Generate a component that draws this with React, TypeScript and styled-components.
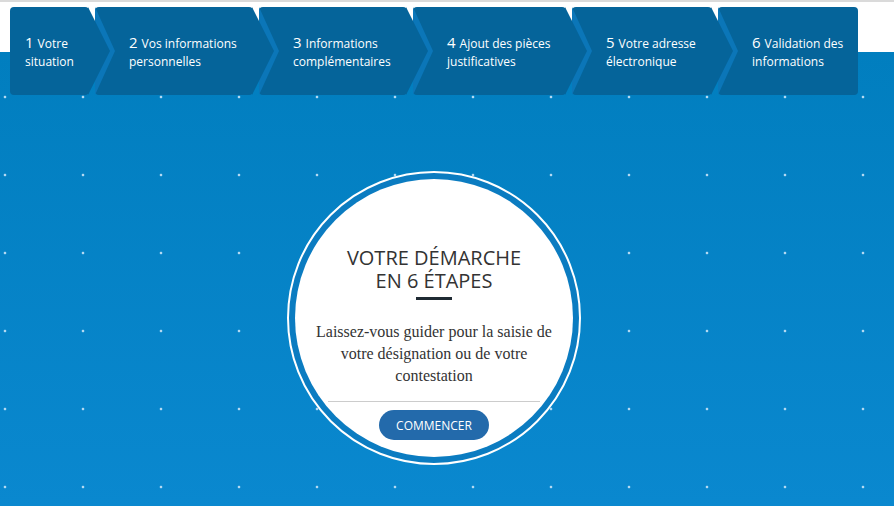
import React from "react";
import styled, { createGlobalStyle } from "styled-components";

const GlobalStyle = createGlobalStyle`
  html, body { margin: 0; padding: 0; }
  body { overflow: hidden; font-family: "Open Sans", "Liberation Sans", sans-serif; }
`;

const TAB = "#05649a";
const STRIPE = "#0b76b8";

const Stage = styled.div`
  box-sizing: border-box;
  min-height: 506px;
  border-top: 2px solid #dadada;
  padding-top: 5px;
  background:
    linear-gradient(#ffffff, #ffffff) 0 0 / 100% 50px no-repeat,
    radial-gradient(circle at 5px 17px, #b3d9f2 1px, rgba(179, 217, 242, 0) 1.7px) 0 0 / 78px 78px,
    linear-gradient(#007dbd, #0a88cf);
`;

const StepNav = styled.nav`
  display: flex;
  gap: 6px;
  padding-left: 10px;
  height: 88px;
`;

const Step = styled.div<{ $w: number; $first?: boolean }>`
  position: relative;
  box-sizing: border-box;
  width: ${(p) => p.$w}px;
  flex: none;
  height: 88px;
  background: ${TAB};
  border-radius: 4px;
  padding: 2px 0 0 ${(p) => (p.$first ? 15 : 34)}px;
  display: flex;
  flex-direction: column;
  justify-content: center;
  color: #ffffff;
  font-size: 12px;
  line-height: 18px;
  white-space: nowrap;
`;

const Num = styled.span`
  font-size: 15px;
  margin-right: 4px;
`;

const Arrow = styled.svg`
  position: absolute;
  top: 0;
  left: calc(100% - 1px);
  z-index: 2;
  overflow: visible;
`;

const Hero = styled.section`
  display: flex;
  justify-content: center;
  padding-right: 26px;
  margin-top: 76px;
`;

const Ring = styled.div`
  box-sizing: border-box;
  width: 294px;
  height: 294px;
  border-radius: 50%;
  border: 2px solid #ffffff;
  padding: 6px;
  background: #0b7cc1;
`;

const Disk = styled.div`
  box-sizing: border-box;
  width: 100%;
  height: 100%;
  border-radius: 50%;
  background: #ffffff;
  display: flex;
  flex-direction: column;
  align-items: center;
  padding-top: 67px;
`;

const Title = styled.h1`
  margin: 0;
  font-family: "Open Sans", "Liberation Sans", sans-serif;
  font-weight: 400;
  font-size: 20px;
  line-height: 23px;
  color: #333333;
  text-align: center;
  text-transform: uppercase;
`;

const Bar = styled.div`
  width: 36px;
  height: 3px;
  background: #1f2a33;
  margin-top: 5px;
`;

const Lead = styled.p`
  margin: 21px 0 0;
  font-family: "Liberation Serif", "Times New Roman", serif;
  font-size: 16px;
  line-height: 22px;
  color: #333333;
  text-align: center;
  width: 250px;
`;

const Divider = styled.div`
  width: 212px;
  height: 1px;
  background: #cccccc;
  margin-top: 14px;
`;

const StartButton = styled.button`
  margin-top: 8px;
  width: 110px;
  height: 30px;
  border: none;
  border-radius: 15px;
  background: #236aab;
  color: #ffffff;
  font-family: "Open Sans", "Liberation Sans", sans-serif;
  font-size: 12px;
  font-weight: 500;
  padding: 0;
  cursor: pointer;
`;

const steps: { n: number; a: string; b: string; w: number }[] = [
  { n: 1, a: "Votre", b: "situation", w: 79 },
  { n: 2, a: "Vos informations", b: "personnelles", w: 158 },
  { n: 3, a: "Informations", b: "complémentaires", w: 148 },
  { n: 4, a: "Ajout des pièces", b: "justificatives", w: 153 },
  { n: 5, a: "Votre adresse", b: "électronique", w: 140 },
  { n: 6, a: "Validation des", b: "informations", w: 140 },
];

export default function App() {
  return (
    <>
      <GlobalStyle />
      <Stage>
        <StepNav>
          {steps.map((s, i) => (
            <Step key={s.n} $w={s.w} $first={i === 0}>
              <div>
                <Num>{s.n}</Num>
                {s.a}
              </div>
              <div>{s.b}</div>
              {i < steps.length - 1 && (
                <Arrow width="30" height="88" viewBox="0 0 30 88">
                  <polygon points="7,0 27,44 7,88" fill={STRIPE} />
                  <polygon points="0,0 22,44 0,88" fill={TAB} />
                </Arrow>
              )}
            </Step>
          ))}
        </StepNav>
        <Hero>
          <Ring>
            <Disk>
              <Title>
                Votre démarche
                <br />
                en 6 étapes
              </Title>
              <Bar />
              <Lead>
                Laissez-vous guider pour la saisie de votre désignation ou de votre contestation
              </Lead>
              <Divider />
              <StartButton>COMMENCER</StartButton>
            </Disk>
          </Ring>
        </Hero>
      </Stage>
    </>
  );
}
